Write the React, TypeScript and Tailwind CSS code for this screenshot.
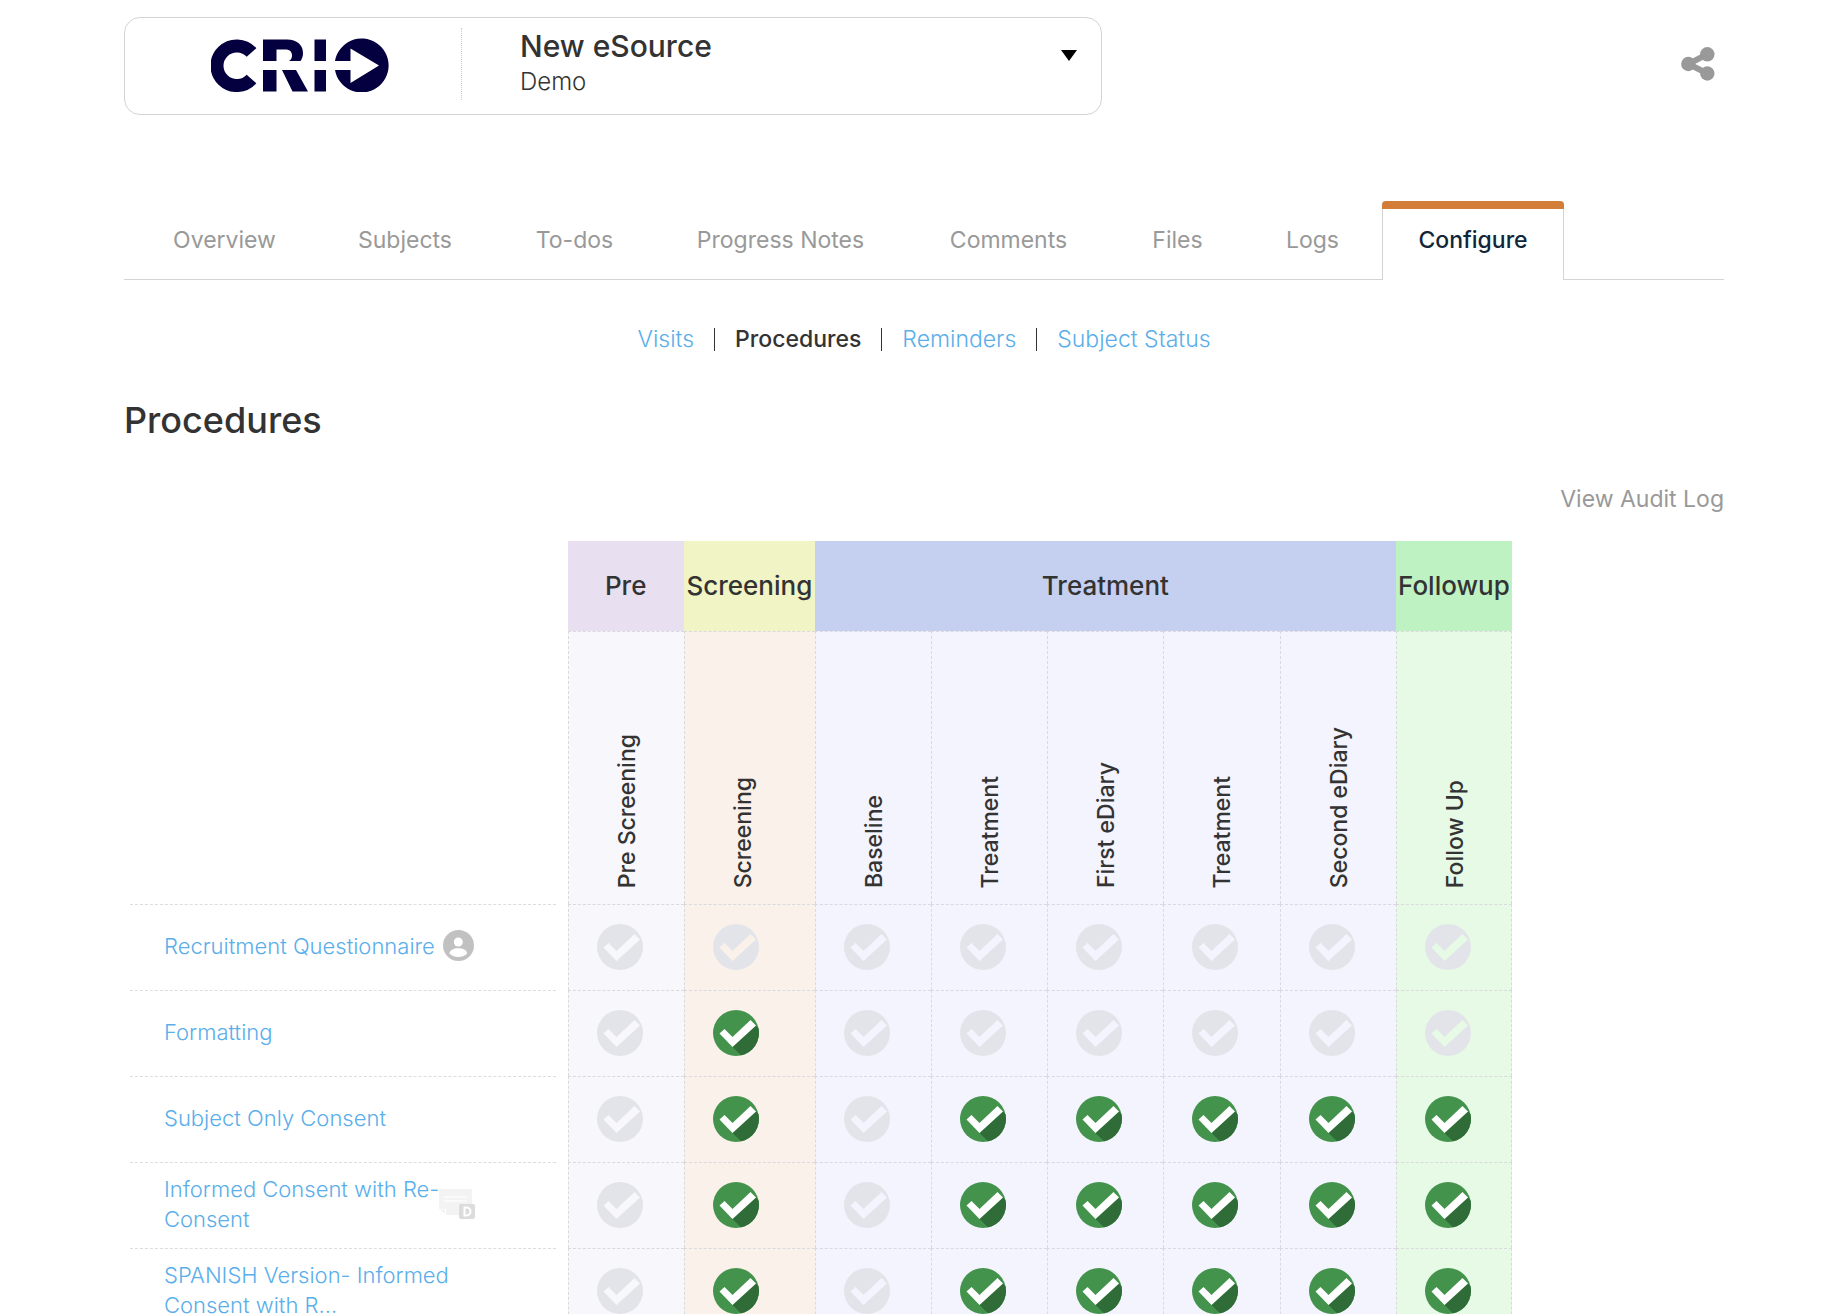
import { useState } from "react"

const TABS = ["Overview", "Subjects", "To-dos", "Progress Notes", "Comments", "Files", "Logs", "Configure"]

const SUB_TABS = ["Visits", "Procedures", "Reminders", "Subject Status"]

const PHASES = [
  { name: "Pre", span: 1, color: "bg-[#e8dff1]" },
  { name: "Screening", span: 1, color: "bg-[#f1f4c4]" },
  { name: "Treatment", span: 5, color: "bg-[#c5cff0]" },
  { name: "Followup", span: 1, color: "bg-[#bff2c3]" },
]

const VISITS = [
  { name: "Pre Screening", color: "bg-[#f7f7fc]" },
  { name: "Screening", color: "bg-[#faf1eb]" },
  { name: "Baseline", color: "bg-[#f3f4fd]" },
  { name: "Treatment", color: "bg-[#f3f4fd]" },
  { name: "First eDiary", color: "bg-[#f3f4fd]" },
  { name: "Treatment", color: "bg-[#f3f4fd]" },
  { name: "Second eDiary", color: "bg-[#f3f4fd]" },
  { name: "Follow Up", color: "bg-[#e6fae6]" },
]

interface Procedure {
  name: string
  icon?: "user" | "note"
  visits: number[]
}

const PROCEDURES: Procedure[] = [
  { name: "Recruitment Questionnaire", icon: "user", visits: [0, 0, 0, 0, 0, 0, 0, 0] },
  { name: "Formatting", visits: [0, 1, 0, 0, 0, 0, 0, 0] },
  { name: "Subject Only Consent", visits: [0, 1, 0, 1, 1, 1, 1, 1] },
  { name: "Informed Consent with Re-\nConsent", icon: "note", visits: [0, 1, 0, 1, 1, 1, 1, 1] },
  { name: "SPANISH Version- Informed\nConsent with R...", visits: [0, 1, 0, 1, 1, 1, 1, 1] },
]

const CrioLogo = () => (
  <svg viewBox="0 0 178 54" className="h-[54px] w-[178px]" role="img" aria-label="CRIO" fill="#04003f">
    <path d="M40.5 14.5A19.8 19.8 0 1 0 40.5 41" fill="none" stroke="#04003f" strokeWidth="13" />
    <path d="M52 1.500h24c10 0 16 5.500 16 13.500 0 3.500-1 6-2.500 8H78c2-1 3-3 3-5.500 0-4-2.500-6-6.500-6h-9V23H52z" />
    <path d="M52 32h13.500v21.500H52zM71 32h14l12 21.500H81.500z" />
    <path d="M103.500 1.500H115V23h-11.500zM103.500 32H115v21.500h-11.500z" />
    <path d="M124 23A27 27 0 1 1 124 32h15.500v13L168 27.500 139.500 10.500V23z" />
  </svg>
)

const ShareIcon = () => (
  <svg viewBox="0 0 34 34" className="size-[34px]" fill="#999" aria-hidden="true">
    <path d="M26 7.300 7.300 17 26 26.300" fill="none" stroke="#999" strokeWidth="6" />
    <circle cx="7.300" cy="17" r="7.200" />
    <circle cx="26.300" cy="7.300" r="7.200" />
    <circle cx="26.300" cy="26.500" r="7.200" />
  </svg>
)

const UserIcon = () => (
  <svg viewBox="0 0 31 31" className="size-[31px] shrink-0" role="img" aria-label="Assigned user">
    <circle cx="15.500" cy="15.500" r="15.500" fill="#c1c1c1" />
    <circle cx="15.300" cy="12" r="4.500" fill="#fff" />
    <path d="M6.500 23.500c0-3.500 4.500-5.300 8.800-5.300s8.800 1.800 8.800 5.300c-2 2-5 3.500-8.800 3.500s-6.800-1.500-8.800-3.500z" fill="#fff" />
  </svg>
)

const NoteIcon = () => (
  <svg viewBox="0 0 36 30" className="h-[30px] w-9 shrink-0" role="img" aria-label="Draft note">
    <path d="M0 0h33v26H7V20H0z" fill="#f3f3f3" />
    <path d="M5 8h23M5 12h23" stroke="#fafafa" strokeWidth="2" />
    <path d="M1 20.500h5V25z" fill="#f3f3f3" />
    <rect x="20" y="15" width="16" height="15" rx="2" fill="#dcdcdc" />
    <path d="M25.500 18.500h2a4 4 0 0 1 0 8h-2z" fill="none" stroke="#fff" strokeWidth="2" />
  </svg>
)

const CheckIcon = ({ checked }: { checked: boolean }) => {
  const tick = "M6.500 23.500 11.500 19 19.500 27 37.500 10 43 15.500 19.500 37z"
  if (!checked) {
    return (
      <svg viewBox="0 0 46 46" className="pointer-events-none col-start-1 row-start-1 size-[46px]" fill="#e3e4e9">
        <path fillRule="evenodd" d={`M23 0a23 23 0 1 0 0 46a23 23 0 1 0 0-46z${tick}`} />
      </svg>
    )
  }
  return (
    <svg viewBox="0 0 46 46" className="pointer-events-none col-start-1 row-start-1 size-[46px]">
      <clipPath id="disc">
        <circle cx="23" cy="23" r="23" />
      </clipPath>
      <g clipPath="url(#disc)">
        <path d="M0 0h46v46H0z" fill="#43934c" />
        <path d="M19.500 37 43 15.500 60 32 40 57z" fill="#2f6c38" />
      </g>
      <path d={tick} fill="#fff" />
    </svg>
  )
}

const ProjectBar = () => (
  <header className="flex items-center justify-between">
    <div className="flex h-[98px] w-[978px] items-center rounded-2xl border border-[#d4d4d4] pb-1">
      <div className="flex h-[72px] w-[337px] items-center justify-center border-r border-dotted border-[#ccc] pt-[2px] pl-[14px]">
        <CrioLogo />
      </div>
      <button className="flex flex-1 items-start justify-between pr-6 pl-[58px] text-left">
        <span>
          <span className="block text-[30px] leading-9 font-medium">New eSource</span>
          <span className="block text-[24px] leading-9 font-light">Demo</span>
        </span>
        <svg viewBox="0 0 16 11" className="mt-[22px] h-[11px] w-4" aria-hidden="true">
          <path d="M0 0h16L8 11z" />
        </svg>
      </button>
    </div>
    <button aria-label="Share" className="mr-[9px] pb-1">
      <ShareIcon />
    </button>
  </header>
)

const MainTabs = () => (
  <nav className="mt-[86px] grid grid-cols-[185px_176px_163px_249px_207px_131px_139px_182px] border-b border-[#d4d4d4] pl-2 text-[23px] leading-9">
    {TABS.map((tab) =>
      tab === "Configure" ? (
        <a
          key={tab}
          href="#configure"
          aria-current="page"
          className="-mb-px rounded-t border-x border-x-[#d4d4d4] bg-white text-center font-medium text-[#12263a]"
        >
          <span className="-mx-px block h-2 rounded-t bg-[#d27d38]" />
          <span className="block pt-[13px] pb-[22px]">{tab}</span>
        </a>
      ) : (
        <a key={tab} href="#tab" className="pt-[21px] text-center text-[#999]">
          {tab}
        </a>
      ),
    )}
  </nav>
)

const SubTabs = () => (
  <nav className="mt-[41px] flex items-center justify-center text-[23px] leading-9">
    {SUB_TABS.map((tab, index) => (
      <div key={tab} className="flex items-center">
        {index > 0 && <span className="mx-5 h-[23px] w-px bg-[#333]" />}
        {tab === "Procedures" ? (
          <a href="#procedures" aria-current="page" className="font-medium">
            {tab}
          </a>
        ) : (
          <a href="#sub" className="font-light text-[#5aaeea]">
            {tab}
          </a>
        )}
      </div>
    ))}
  </nav>
)

const ProcedureTable = () => {
  const [grid, setGrid] = useState(PROCEDURES.map((procedure) => procedure.visits))

  const toggle = (row: number, col: number) => {
    setGrid(grid.map((cells, r) => (r === row ? cells.map((v, c) => (c === col ? 1 - v : v)) : cells)))
  }

  return (
    <table className="mt-6 w-[1388px] table-fixed border-separate border-spacing-0">
      <colgroup>
        <col className="w-[443px]" />
        {VISITS.map((visit, index) => (
          <col key={index} className={visit.name === "Screening" ? "w-[131px]" : "w-[116px]"} />
        ))}
      </colgroup>
      <thead>
        <tr>
          <td />
          {PHASES.map((phase) => (
            <th
              key={phase.name}
              colSpan={phase.span}
              scope="colgroup"
              className={`h-[90px] p-0 text-[26px] leading-9 font-medium whitespace-nowrap ${phase.color}`}
            >
              {phase.name}
            </th>
          ))}
        </tr>
        <tr>
          <td />
          {VISITS.map((visit, index) => (
            <th
              key={index}
              scope="col"
              className={`h-[273px] border-t border-l border-dashed border-[#d9d9de] p-0 pb-4 pl-10 align-bottom last:border-r ${visit.color}`}
            >
              <span className="block w-9 rotate-180 text-left text-[23px] leading-9 font-medium [writing-mode:vertical-rl]">
                {visit.name}
              </span>
            </th>
          ))}
        </tr>
      </thead>
      <tbody>
        {PROCEDURES.map((procedure, row) => (
          <tr key={procedure.name}>
            <th scope="row" className="p-0 text-left font-light">
              <div className="mr-3 ml-[6px] flex h-[86px] items-center border-t border-dashed border-[#ddd] pb-1 pl-[34px]">
                <a
                  href="#procedure"
                  className={`text-[22px] leading-[30px] whitespace-pre text-[#5aaeea] ${procedure.icon === "user" ? "mr-2" : "w-[275px]"}`}
                >
                  {procedure.name}
                </a>
                {procedure.icon === "user" && <UserIcon />}
                {procedure.icon === "note" && <NoteIcon />}
              </div>
            </th>
            {VISITS.map((visit, col) => (
              <td
                key={col}
                className={`h-[86px] border-t border-l border-dashed border-[#d9d9de] p-0 pb-[2px] pl-7 last:border-r ${visit.color}`}
              >
                <span className="grid size-[46px]">
                  <input
                    type="checkbox"
                    aria-label={`${procedure.name}, ${visit.name}`}
                    checked={grid[row][col] === 1}
                    onChange={() => toggle(row, col)}
                    className="col-start-1 row-start-1 size-[46px] appearance-none rounded-full"
                  />
                  <CheckIcon checked={grid[row][col] === 1} />
                </span>
              </td>
            ))}
          </tr>
        ))}
      </tbody>
    </table>
  )
}

export default function App() {
  return (
    <div className="min-h-screen bg-white pt-[17px] pr-[110px] pl-[124px] font-[Inter,sans-serif] text-[#333]">
      <ProjectBar />
      <MainTabs />
      <SubTabs />
      <main>
        <h1 className="mt-10 text-[36px] leading-[46px] font-medium">Procedures</h1>
        <div className="mt-[38px] flex justify-end text-[23px] leading-9">
          <a href="#audit" className="text-[#999]">
            View Audit Log
          </a>
        </div>
        <ProcedureTable />
      </main>
    </div>
  )
}
